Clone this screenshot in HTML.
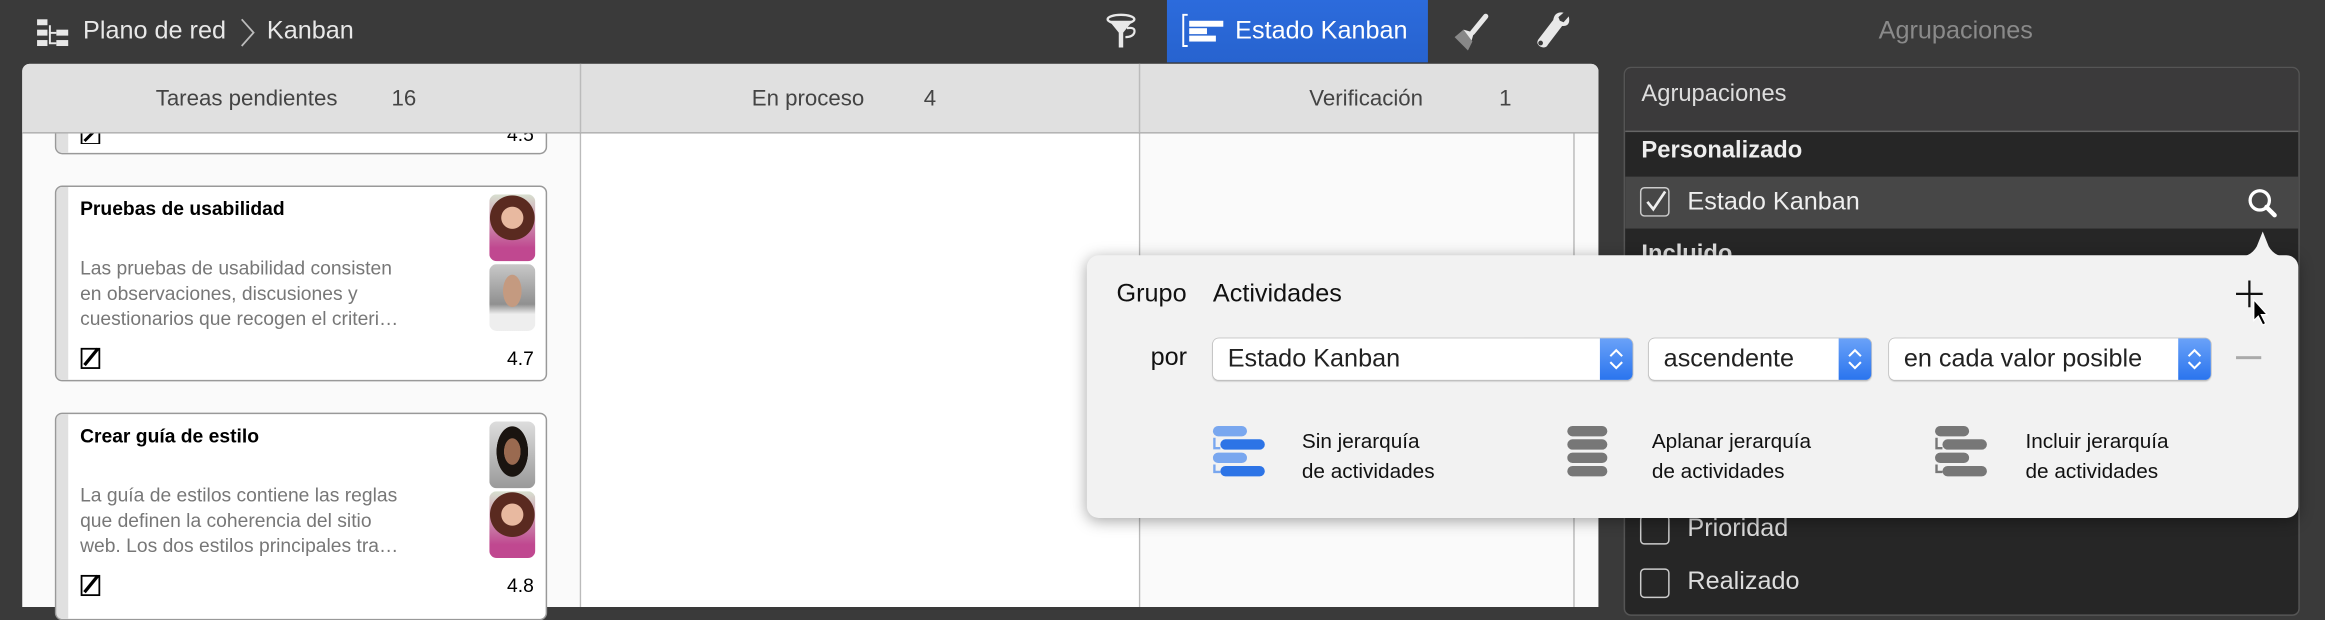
<!DOCTYPE html>
<html><head><meta charset="utf-8"><style>
*{margin:0;padding:0;box-sizing:border-box}
html,body{width:2325px;height:607px;overflow:hidden;background:#3a3a3a}
#s{position:absolute;left:0;top:0;width:1568px;height:409px;transform:scale(1.48278,1.48411);transform-origin:0 0;font-family:"Liberation Sans",sans-serif;background:#3a3a3a}
.a{position:absolute}
.t{position:absolute;white-space:nowrap}
.card{position:absolute;left:37px;width:332px;background:#fff;border:1px solid #999;border-radius:5px;overflow:hidden}
.card .st{position:absolute;left:0;top:0;bottom:0;width:8px;background:#e0e0e0}
.card .ti{position:absolute;left:16px;font-weight:bold;font-size:13px;color:#000}
.card .d{position:absolute;left:16px;font-size:13px;color:#777;line-height:17px}
.av{position:absolute;left:292px;width:31px;height:45px;border-radius:5px}
.sel{position:absolute;height:28px;background:#fff;border-radius:4px;box-shadow:0 0 0 .5px #bbb,0 1px 1px rgba(0,0,0,.2);font-size:17px;color:#222;line-height:28px;padding-left:10px}
.sel .b{position:absolute;right:0;top:0;width:22px;height:28px;background:linear-gradient(#6aa2f8,#2a74ee);border-radius:0 4px 4px 0}
.cb{position:absolute;left:1106px;width:20px;height:20px;border:1.5px solid #ccc;border-radius:3px}
</style></head><body><div id="s">
<!-- title bar -->
<svg class="a" style="left:24px;top:12px" width="24" height="20" viewBox="0 0 24 20"><g fill="#e8e8e8"><rect x="1" y="1" width="7" height="4"/><rect x="1" y="8" width="7" height="4"/><rect x="1" y="15" width="7" height="4"/><rect x="14" y="8" width="8" height="4"/><rect x="14" y="15" width="8" height="4"/><rect x="9" y="5" width="1.3" height="12"/><rect x="9" y="9.5" width="5" height="1.3"/><rect x="9" y="16.5" width="5" height="1.3"/></g></svg>
<div class="t" style="left:56px;top:11px;font-size:17px;color:#e8e8e8">Plano de red</div>
<svg class="a" style="left:161px;top:11px" width="12" height="22"><path d="M2 2 L10 11 L2 20" stroke="#bbb" stroke-width="1.2" fill="none"/></svg>
<div class="t" style="left:180px;top:11px;font-size:17px;color:#e8e8e8">Kanban</div>
<svg class="a" style="left:745px;top:9px" width="24" height="24" viewBox="0 0 24 24"><ellipse cx="11" cy="4" rx="9" ry="3" stroke="#e8e8e8" stroke-width="1.6" fill="none"/><path d="M3 5 L9.5 13 L9.5 23 L12.5 23 L12.5 13 L19 5Z" fill="#e8e8e8"/><path d="M15 10 q6 -1 5 3 q-1 3 -6 3" stroke="#e8e8e8" stroke-width="1.5" fill="none"/></svg>
<div class="a" style="left:787px;top:0;width:176px;height:42px;background:linear-gradient(#2c6bdc,#2763cf)"></div>
<svg class="a" style="left:797px;top:9px" width="29" height="23" viewBox="0 0 29 23"><path d="M4 1 H1 V22 H4" stroke="#fff" stroke-width="1.3" fill="none"/><rect x="5" y="5" width="23" height="4" fill="#fff"/><rect x="5" y="10" width="12" height="4" fill="#fff"/><rect x="5" y="15" width="18" height="4" fill="#fff"/></svg>
<div class="t" style="left:833px;top:11px;font-size:17px;color:#fff">Estado Kanban</div>
<svg class="a" style="left:979px;top:8px" width="26" height="26" viewBox="0 0 26 26"><path d="M23 3 L14 14" stroke="#e8e8e8" stroke-width="3.5" stroke-linecap="round"/><path d="M8 12 L15 14 L13 21 Z" fill="#e8e8e8"/><path d="M2 17 L8 12 L14 20 L11 26 Z" fill="#888"/></svg>
<svg class="a" style="left:1034px;top:8px" width="26" height="26" viewBox="0 0 26 26"><path d="M24 3 l-3.5 4 -2.5 -1 -1 -2.5 3.5 -3 q-6 -1 -7 5 l-10 13 q-2 3 1.5 5 q3.5 1.5 5 -1.5 l9.5 -12.5 q6 0.5 4.5 -6.5z" fill="#e8e8e8"/><circle cx="5" cy="21" r="1.6" fill="#3a3a3a"/></svg>
<div class="t" style="left:1267px;top:11px;font-size:17px;color:#8a8a8a">Agrupaciones</div>

<!-- kanban -->
<div class="a" style="left:15px;top:43px;width:1063px;height:366px;background:#fafafa;border-radius:5px 5px 0 0;overflow:hidden">
 <div class="a" style="left:376px;top:0;width:1px;height:366px;background:#bbb"></div>
 <div class="a" style="left:753px;top:0;width:1px;height:366px;background:#bbb"></div>
 <div class="a" style="left:1046px;top:46px;width:1px;height:320px;background:#bbb"></div>
 <div class="a" style="left:377px;top:47px;width:376px;height:320px;background:#fff"></div>
</div>
<!-- partial card -->
<div class="card" style="top:50px;height:54px"><div class="st"></div>
 <svg class="a" style="left:16px;top:34px" width="14" height="12"><rect x="1" y="1" width="12" height="11" fill="none" stroke="#000" stroke-width="1.2"/><path d="M3 10 L11 2" stroke="#000" stroke-width="2"/></svg>
 <div class="t" style="right:8px;top:32px;font-size:13px">4.5</div>
</div>
<div class="card" style="top:125px;height:132px"><div class="st"></div>
 <div class="ti" style="top:7px">Pruebas de usabilidad</div>
 <div class="d" style="top:46px">Las pruebas de usabilidad consisten<br>en observaciones, discusiones y<br>cuestionarios que recogen el criteri…</div>
 <div class="av" style="top:5px;background:radial-gradient(circle at 50% 35%,#e8b9a0 0 22%,#5a2a20 23% 45%,transparent 46%),linear-gradient(#d8e0d0,#c04890 80%)"></div>
 <div class="av" style="top:52px;background:radial-gradient(ellipse at 50% 40%,#c49a80 0 28%,transparent 29%),linear-gradient(#c8c8c8,#909090 60%,#eee 75%)"></div>
 <svg class="a" style="left:16px;top:107px" width="14" height="16"><rect x="1" y="2" width="12" height="13" fill="none" stroke="#000" stroke-width="1.2"/><path d="M3 13 L12 2" stroke="#000" stroke-width="2.2"/></svg>
 <div class="t" style="right:8px;top:108px;font-size:13px">4.7</div>
</div>
<div class="card" style="top:278px;height:140px"><div class="st"></div>
 <div class="ti" style="top:7px">Crear guía de estilo</div>
 <div class="d" style="top:46px">La guía de estilos contiene las reglas<br>que definen la coherencia del sitio<br>web. Los dos estilos principales tra…</div>
 <div class="av" style="top:5px;background:radial-gradient(ellipse at 50% 45%,#9a6a50 0 25%,#1a1410 26% 48%,transparent 49%),linear-gradient(#ddd,#999)"></div>
 <div class="av" style="top:52px;background:radial-gradient(circle at 50% 35%,#e8b9a0 0 22%,#5a2a20 23% 45%,transparent 46%),linear-gradient(#d8e0d0,#c04890 80%)"></div>
 <svg class="a" style="left:16px;top:107px" width="14" height="16"><rect x="1" y="2" width="12" height="13" fill="none" stroke="#000" stroke-width="1.2"/><path d="M3 13 L12 2" stroke="#000" stroke-width="2.2"/></svg>
 <div class="t" style="right:8px;top:108px;font-size:13px">4.8</div>
</div>
<!-- kanban header (on top of cards) -->
<div class="a" style="left:15px;top:43px;width:1063px;height:47px;background:#e0e0e0;border-bottom:1px solid #aaa;border-radius:5px 5px 0 0">
 <div class="a" style="left:376px;top:0;width:1px;height:46px;background:#bbb"></div>
 <div class="a" style="left:753px;top:0;width:1px;height:46px;background:#bbb"></div>
 <div class="t" style="left:90px;top:15px;font-size:15px;color:#444">Tareas pendientes</div>
 <div class="t" style="left:249px;top:15px;font-size:15px;color:#444">16</div>
 <div class="t" style="left:492px;top:15px;font-size:15px;color:#444">En proceso</div>
 <div class="t" style="left:608px;top:15px;font-size:15px;color:#444">4</div>
 <div class="t" style="left:868px;top:15px;font-size:15px;color:#444">Verificación</div>
 <div class="t" style="left:996px;top:15px;font-size:15px;color:#444">1</div>
</div>

<!-- right panel -->
<div class="a" style="left:1095px;top:45px;width:456px;height:370px;background:#262626;border:1px solid #555;border-radius:5px;overflow:hidden">
 <div class="a" style="left:0;top:0;width:456px;height:43px;background:#3b3a3b;border-bottom:1px solid #666"></div>
 <div class="t" style="left:11px;top:9px;font-size:16px;color:#ddd">Agrupaciones</div>
 <div class="t" style="left:11px;top:47px;font-size:16px;font-weight:bold;color:#eee">Personalizado</div>
 <div class="a" style="left:0;top:73px;width:456px;height:35px;background:#474747"></div>
 <div class="t" style="left:11px;top:117px;font-size:16px;font-weight:bold;color:#ddd">Incluido</div>
</div>
<div class="cb" style="top:126px"></div>
<svg class="a" style="left:1108px;top:127px" width="18" height="18"><path d="M3 9 L7 14 L15 2" stroke="#eee" stroke-width="1.8" fill="none"/></svg>
<div class="t" style="left:1138px;top:126px;font-size:17px;color:#eee">Estado Kanban</div>
<svg class="a" style="left:1515px;top:126px" width="22" height="22"><circle cx="9" cy="9" r="6.5" stroke="#fff" stroke-width="2.2" fill="none"/><path d="M13.5 13.5 L19 19" stroke="#fff" stroke-width="3" stroke-linecap="round"/></svg>
<div class="cb" style="top:347px"></div>
<div class="t" style="left:1138px;top:346px;font-size:17px;color:#ddd">Prioridad</div>
<div class="cb" style="top:383px"></div>
<div class="t" style="left:1138px;top:382px;font-size:17px;color:#ddd">Realizado</div>

<!-- popover -->
<div class="a" style="left:733px;top:172px;width:817px;height:177px;background:#f2f2f2;border-radius:8px;box-shadow:0 2px 10px rgba(0,0,0,.35)"></div>
<svg class="a" style="left:1510px;top:154px" width="32" height="20"><path d="M0 19 Q8 19 12 12 L16 2 L20 12 Q24 19 32 19Z" fill="#f2f2f2"/></svg>
<div class="t" style="left:753px;top:188px;font-size:17px;color:#111">Grupo</div>
<div class="t" style="left:818px;top:188px;font-size:17px;color:#111">Actividades</div>
<svg class="a" style="left:1506px;top:188px" width="30" height="32"><path d="M11 1 V19 M2 10 H20" stroke="#111" stroke-width="1.5"/><path d="M14 14 L14 28 L17 25 L20 31 L22 30 L19 24 L23 24Z" fill="#000" stroke="#fff" stroke-width=".8"/></svg>
<div class="t" style="left:776px;top:231px;font-size:17px;color:#111">por</div>
<div class="sel" style="left:818px;top:228px;width:283px">Estado Kanban<div class="b"></div></div>
<div class="sel" style="left:1112px;top:228px;width:150px">ascendente<div class="b"></div></div>
<div class="sel" style="left:1274px;top:228px;width:217px">en cada valor posible<div class="b"></div></div>
<svg class="a" style="left:1079px;top:231px" width="22" height="22"><path d="M7 9 L11 5 L15 9 M7 13 L11 17 L15 13" stroke="#fff" stroke-width="1.4" fill="none"/></svg>
<svg class="a" style="left:1240px;top:231px" width="22" height="22"><path d="M7 9 L11 5 L15 9 M7 13 L11 17 L15 13" stroke="#fff" stroke-width="1.4" fill="none"/></svg>
<svg class="a" style="left:1469px;top:231px" width="22" height="22"><path d="M7 9 L11 5 L15 9 M7 13 L11 17 L15 13" stroke="#fff" stroke-width="1.4" fill="none"/></svg>
<div class="a" style="left:1508px;top:240px;width:17px;height:2px;background:#aaa"></div>
<svg class="a" style="left:817px;top:286px" width="38" height="38"><rect x="1" y="1" width="23" height="7" rx="3.5" fill="#79a7ef"/><rect x="6" y="10" width="30" height="7" rx="3.5" fill="#2d74e6"/><rect x="1" y="19" width="23" height="7" rx="3.5" fill="#79a7ef"/><rect x="6" y="28" width="30" height="7" rx="3.5" fill="#2d74e6"/><path d="M2 9 V16 H6 M2 27 V32 H6" stroke="#79a7ef" stroke-width="1.6" fill="none"/></svg>
<div class="t" style="left:878px;top:287px;font-size:14px;color:#111;line-height:20px">Sin jerarquía<br>de actividades</div>
<svg class="a" style="left:1056px;top:286px" width="30" height="38"><g fill="#777"><rect x="1" y="1" width="27" height="7" rx="3.5"/><rect x="1" y="10" width="27" height="7" rx="3.5"/><rect x="1" y="19" width="27" height="7" rx="3.5"/><rect x="1" y="28" width="27" height="7" rx="3.5"/></g></svg>
<div class="t" style="left:1114px;top:287px;font-size:14px;color:#111;line-height:20px">Aplanar jerarquía<br>de actividades</div>
<svg class="a" style="left:1304px;top:286px" width="38" height="38"><g fill="#777"><rect x="1" y="1" width="23" height="7" rx="3.5"/><rect x="6" y="10" width="30" height="7" rx="3.5"/><rect x="1" y="19" width="23" height="7" rx="3.5"/><rect x="6" y="28" width="30" height="7" rx="3.5"/></g><path d="M2 9 V16 H6 M2 27 V32 H6" stroke="#777" stroke-width="1.6" fill="none"/></svg>
<div class="t" style="left:1366px;top:287px;font-size:14px;color:#111;line-height:20px">Incluir jerarquía<br>de actividades</div>
</div></body></html>
